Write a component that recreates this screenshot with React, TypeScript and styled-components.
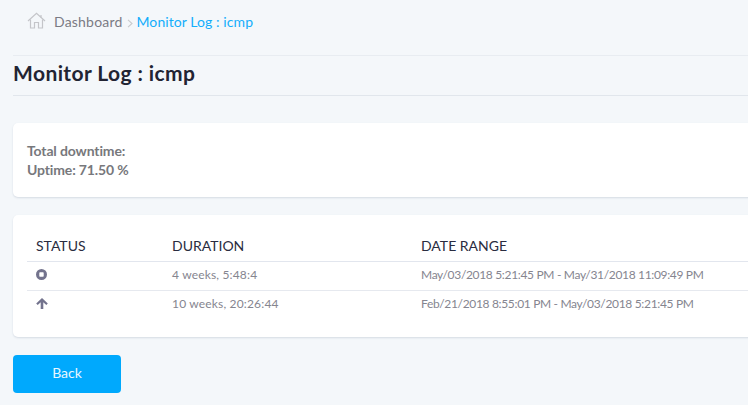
import styled, { createGlobalStyle } from "styled-components";

const GlobalStyle = createGlobalStyle`
  html, body {
    margin: 0;
    padding: 0;
    height: 100%;
    overflow: hidden;
    background: #f4f7fa;
  }
  body {
    font-family: "Lato", "Open Sans", sans-serif;
  }
`;

const Page = styled.div`
  width: 748px;
  height: 405px;
  overflow: hidden;
  padding-left: 13px;
  box-sizing: border-box;
`;

const Breadcrumb = styled.nav`
  height: 55px;
  display: flex;
  align-items: flex-start;
  padding: 12px 0 0 14px;
  box-sizing: border-box;
  font-size: 14px;
  line-height: 20px;
  letter-spacing: 0.2px;
`;

const HomeIcon = styled.svg`
  width: 19px;
  height: 17px;
  margin-right: 8px;
  flex: none;
`;

const Crumb = styled.span`
  color: #7b7b84;
`;

const Separator = styled.svg`
  width: 6px;
  height: 9px;
  margin: 7px 4px 0 4px;
  flex: none;
`;

const ActiveCrumb = styled.span`
  color: #13aefc;
  letter-spacing: 0.08px;
`;

const TitleBar = styled.div`
  height: 41px;
  padding-bottom: 6px;
  border-top: 1px solid #e8ecf1;
  border-bottom: 1px solid #e1e6ec;
  box-sizing: border-box;
  display: flex;
  align-items: center;
  margin-bottom: 27px;
`;

const Title = styled.h1`
  margin: 0;
  font-size: 21px;
  font-weight: 700;
  color: #222433;
  letter-spacing: 0.4px;
`;

const Card = styled.section<{ $height: number }>`
  width: 900px;
  height: ${(p) => p.$height}px;
  background: #fff;
  border-radius: 5px;
  box-shadow: 0 1px 2px rgba(90, 110, 140, 0.2);
  box-sizing: border-box;
  margin-bottom: 18px;
`;

const Summary = styled.div`
  padding: 18px 14px;
  font-size: 14px;
  line-height: 19px;
  font-weight: 700;
  color: #77787c;
  letter-spacing: -0.14px;
`;

const Table = styled.div`
  padding: 19px 0 0 14px;
`;

const Row = styled.div<{ $head?: boolean }>`
  display: grid;
  grid-template-columns: 136px 249px 1fr;
  align-items: center;
  height: 28px;
  padding: 0 0 ${(p) => (p.$head ? 4 : 3)}px 9px;
  border-bottom: ${(p) => (p.$head ? "1px solid #e2e6ee" : "0")};
  box-sizing: border-box;
`;

const RowLine = styled.div`
  height: 1px;
  background: #e6e9ef;
`;

const Head = styled.span`
  font-size: 14px;
  color: #2a2c40;
`;

const Cell = styled.span<{ $tight?: boolean }>`
  font-size: 12px;
  color: #85858f;
  letter-spacing: ${(p) => (p.$tight ? "-0.33px" : "0.17px")};
`;

const StatusIcon = styled.span`
  display: flex;
  color: #73738d;
`;

const BackButton = styled.button`
  width: 108px;
  height: 38px;
  display: block;
  padding: 0 0 3px;
  border: 0;
  border-radius: 4px;
  background: #00a9fd;
  color: #e9f7ff;
  font-family: inherit;
  font-size: 14px;
`;

const rows = [
  { icon: "paused", duration: "4 weeks, 5:48:4", range: "May/03/2018 5:21:45 PM - May/31/2018 11:09:49 PM" },
  { icon: "up", duration: "10 weeks, 20:26:44", range: "Feb/21/2018 8:55:01 PM - May/03/2018 5:21:45 PM" },
];

export default function App() {
  return (
    <Page>
      <GlobalStyle />
      <Breadcrumb>
        <HomeIcon viewBox="0 0 19 17" fill="none" stroke="#c4c5c9" strokeWidth="1.2">
          <path d="M1 9 9.5 1.2 18 9" />
          <path d="M3.5 7.5V16H7.5V10.5H11.5V16H15.5V7.5" />
          <path d="M14 3V5.5" />
        </HomeIcon>
        <Crumb>Dashboard</Crumb>
        <Separator viewBox="0 0 6 9" fill="none" stroke="#c9cacd" strokeWidth="1.1">
          <path d="M1 .8 5 4.5 1 8.2" />
        </Separator>
        <ActiveCrumb>Monitor Log : icmp</ActiveCrumb>
      </Breadcrumb>
      <TitleBar>
        <Title>Monitor Log : icmp</Title>
      </TitleBar>
      <Card $height={74}>
        <Summary>
          Total downtime:
          <br />
          Uptime: 71.50 %
        </Summary>
      </Card>
      <Card $height={122}>
        <Table>
          <Row $head>
            <Head>STATUS</Head>
            <Head>DURATION</Head>
            <Head>DATE RANGE</Head>
          </Row>
          {rows.map((row) => (
            <div key={row.range}>
              <Row>
                <StatusIcon>
                  {row.icon === "up" ? (
                    <svg width="12" height="11" viewBox="0 0 12 11">
                      <path fill="#73738d" d="M6 0 11.8 5.4 10.3 7 7.3 4.2V11H4.7V4.2L1.7 7 .2 5.4Z" />
                    </svg>
                  ) : (
                    <svg width="11" height="11" viewBox="0 0 11 11">
                      <path
                        fill="#73738d"
                        fillRule="evenodd"
                        d="M5.5 0a5.5 5.5 0 1 0 0 11 5.5 5.5 0 0 0 0-11ZM4 3.3h3c.4 0 .7.3.7.7v3c0 .4-.3.7-.7.7H4a.7.7 0 0 1-.7-.7V4c0-.4.3-.7.7-.7Z"
                      />
                    </svg>
                  )}
                </StatusIcon>
                <Cell>{row.duration}</Cell>
                <Cell $tight>{row.range}</Cell>
              </Row>
              {row.icon !== "up" && <RowLine />}
            </div>
          ))}
        </Table>
      </Card>
      <BackButton>Back</BackButton>
    </Page>
  );
}
